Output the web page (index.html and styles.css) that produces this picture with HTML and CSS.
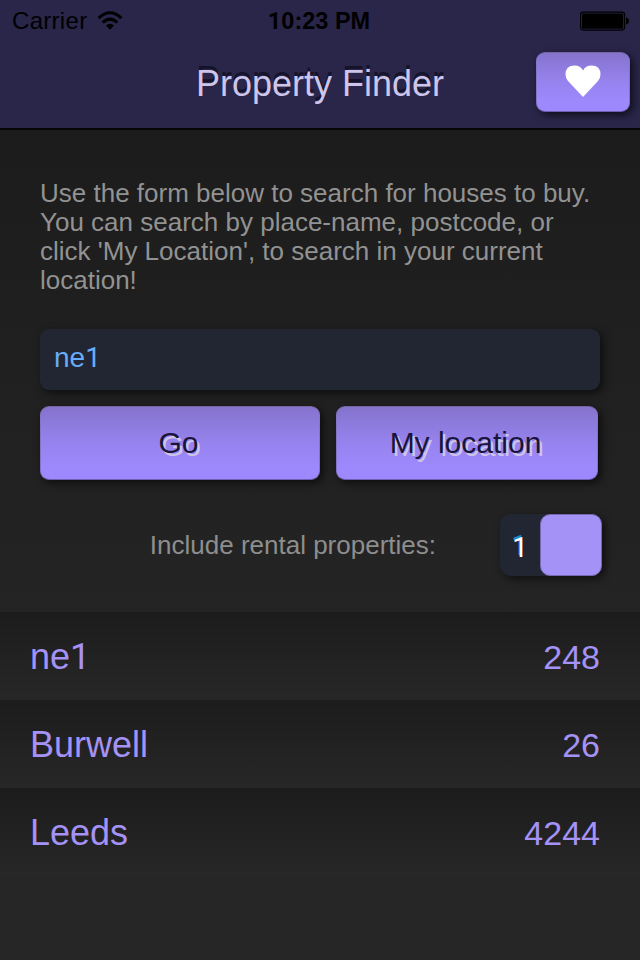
FILE: index.html
```
<!DOCTYPE html>
<html lang="en">
<head>
<meta charset="utf-8">
<title>Property Finder</title>
<link rel="stylesheet" href="styles.css">
</head>
<body>
<header class="header">
  <div class="status">
    <div class="carrier">
      <span>Carrier</span>
      <svg class="wifi" width="26" height="20" viewBox="0 0 26 20">
        <path d="M1.6 7.1Q13-3.5 24.4 7.1" fill="none" stroke="#000" stroke-width="3"/>
        <path d="M5.7 11.5Q13 4.8 20.3 11.5" fill="none" stroke="#000" stroke-width="3"/>
        <path d="M8.9 14.5Q13 11 17.1 14.5L13 18.7Z"/>
      </svg>
    </div>
    <span class="clock"><span class="digit">1</span>0:23 PM</span>
    <svg class="battery" width="50" height="20" viewBox="0 0 50 20">
      <rect x="0.6" y="1.1" width="44" height="18" rx="2.5" fill="none" stroke="#000" stroke-width="1.1"/>
      <rect x="2" y="2.5" width="41.2" height="15.2" rx="1"/>
      <path d="M46 6.500h.5q2.500.7 2.500 3.500t-2.500 3.500H46Z"/>
    </svg>
  </div>
  <div class="navbar">
    <h1 class="title">Property Finder</h1>
    <button class="button favourites" aria-label="Favourites">
      <svg width="36" height="34" viewBox="0 0 36 34">
        <path d="M18 33L3 17Q.5 14 .5 10.500Q.5 1.500 9.500 1.500Q15.500 1.500 18 6.500Q20.500 1.500 26.500 1.500Q35.500 1.500 35.500 10.500Q35.500 14 33 17Z" fill="#fff"/>
      </svg>
    </button>
  </div>
</header>
<main>
  <section class="search">
    <p class="intro">Use the form below to search for houses to buy.<br>You can search by place-name, postcode, or<br>click 'My Location', to search in your current<br>location!</p>
    <div class="field">ne<span class="digit">1</span></div>
    <div class="actions">
      <button class="button go">Go</button>
      <button class="button locate">My location</button>
    </div>
    <div class="rental">
      <span class="rental-label">Include rental properties:</span>
      <div class="switch"><span class="switch-value digit">1</span><span class="thumb"></span></div>
    </div>
  </section>
  <ul class="recent">
    <li><span class="place">ne<span class="digit">1</span></span><span class="count">248</span></li>
    <li><span class="place">Burwell</span><span class="count">26</span></li>
    <li><span class="place">Leeds</span><span class="count">4244</span></li>
  </ul>
</main>
</body>
</html>
```
FILE: styles.css
```
* { box-sizing: border-box; }
body {
  margin: 0;
  width: 640px;
  height: 960px;
  overflow: hidden;
  background: #262626;
  font-family: "Liberation Sans", Arial, sans-serif;
}
.digit { font-family: Roboto, "Liberation Sans", sans-serif; }
.header {
  height: 130px;
  background: #29264a;
  border-bottom: 2px solid #060608;
}
.status {
  display: grid;
  grid-template-columns: 1fr auto 1fr;
  align-items: center;
  height: 40px;
  padding: 1px 10px 0 12px;
  font-size: 24px;
  line-height: 40px;
  color: #000;
}
.carrier { display: flex; align-items: center; gap: 10px; letter-spacing: .3px; }
.wifi { margin-bottom: 1px; }
.clock { margin-left: -4px; font-weight: bold; font-size: 23.5px; }
.battery { justify-self: end; }
.navbar {
  display: grid;
  grid-template-columns: 94px 1fr 94px;
  padding: 12px 10px 0;
}
.title {
  grid-column: 2;
  margin: 0;
  font-size: 36px;
  font-weight: normal;
  line-height: 64px;
  text-align: center;
  color: #cdc5ea;
  text-shadow: 0 -4px 0 #15132a;
}
.button {
  display: flex;
  align-items: center;
  justify-content: center;
  padding: 0 3px 0 0;
  border: 1px solid;
  border-color: #75669f #8375c4 #6c5fae #8375c4;
  border-radius: 9px;
  background: linear-gradient(#8573cd, #9783ee 50%, #9d88fc 80%, #9d88ff);
  box-shadow: 3px 3px 8px rgba(0, 0, 0, .65);
  font: 30px/72px "Liberation Sans", Arial, sans-serif;
  color: #19143a;
  text-shadow: 2.5px 2.5px 0 #cdc4e9;
}
.favourites { height: 60px; padding: 0 1px 2px 0; }
.search {
  height: 482px;
  padding: 49px 40px 0;
  background: linear-gradient(#1c1c1c, #242424);
}
.intro {
  margin: 0;
  font-size: 26px;
  line-height: 29px;
  white-space: nowrap;
  color: #929292;
}
.field {
  height: 61px;
  margin-top: 34px;
  padding-left: 14px;
  border-radius: 9px;
  background: #212632;
  box-shadow: 3px 3px 8px rgba(0, 0, 0, .6);
  font-size: 28px;
  line-height: 57px;
  color: #67adf8;
}
.actions {
  display: grid;
  grid-template-columns: 280px 262px;
  gap: 16px;
  height: 74px;
  margin-top: 16px;
}
.rental {
  display: flex;
  align-items: center;
  justify-content: flex-end;
  gap: 64px;
  height: 62px;
  margin: 34px -2px 0 0;
}
.rental-label { font-size: 26px; color: #8e8e8e; }
.switch {
  display: flex;
  width: 102px;
  height: 62px;
  border-radius: 11px;
  background: #212632;
  box-shadow: 3px 3px 8px rgba(0, 0, 0, .6);
}
.switch-value {
  width: 40px;
  font-size: 28px;
  line-height: 68px;
  text-align: center;
  color: #fff;
  text-shadow: -1px -2px 0 #168bd0;
}
.thumb {
  width: 62px;
  border: 1px solid #7767ae;
  border-radius: 10px;
  background: #a592f6;
}
.recent { margin: 0; padding: 0; list-style: none; }
.recent li {
  display: flex;
  justify-content: space-between;
  height: 88px;
  padding: 0 40px 0 30px;
  background: linear-gradient(#1c1c1c, #272727);
  font-size: 36px;
  line-height: 90px;
  color: #a592f6;
}
.recent .count { font-size: 34px; }
```
